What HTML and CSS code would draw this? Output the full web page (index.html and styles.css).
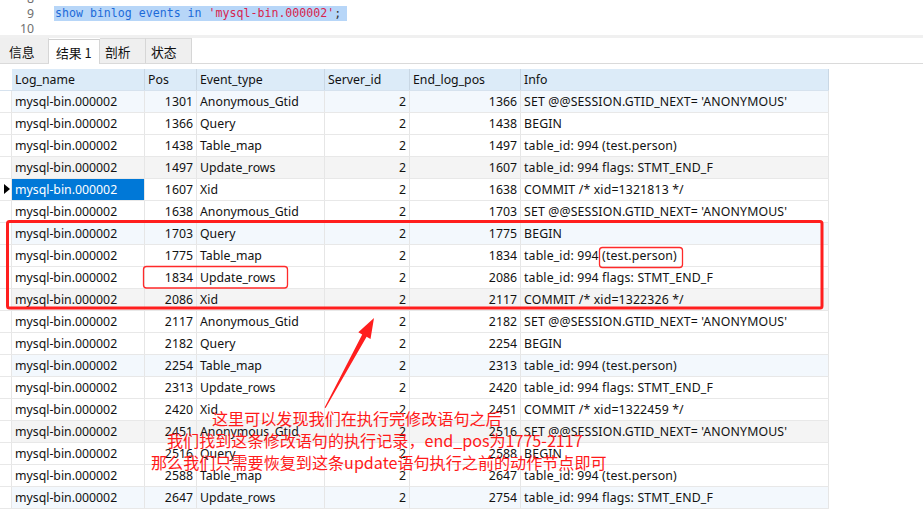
FILE: index.html
```html
<!DOCTYPE html>
<html lang="zh">
<head>
<meta charset="utf-8">
<title>binlog events</title>
<link rel="stylesheet" href="styles.css">
</head>
<body>
<div class="page">
  <div class="editor">
    <div class="lines">
      <div class="line"><span class="ln">8</span><span class="code"></span></div>
      <div class="line"><span class="ln">9</span><span class="code sel"><span class="kw">show binlog events in</span> <span class="str">'mysql-bin.000002'</span><span class="punc">;</span></span></div>
      <div class="line"><span class="ln">10</span><span class="code"></span></div>
    </div>
  </div>
  <div class="sep"></div>
  <div class="tabbar">
    <div class="tab">信息</div>
    <div class="tab active">结果 1</div>
    <div class="tab">剖析</div>
    <div class="tab">状态</div>
  </div>
  <div class="grid">
    <div class="row head">
      <div class="gut"></div>
      <div class="c">Log_name</div>
      <div class="c">Pos</div>
      <div class="c">Event_type</div>
      <div class="c">Server_id</div>
      <div class="c">End_log_pos</div>
      <div class="c">Info</div>
    </div>
    <div class="row tint-b"><div class="gut"></div><div class="c">mysql-bin.000002</div><div class="c r">1301</div><div class="c">Anonymous_Gtid</div><div class="c r">2</div><div class="c r">1366</div><div class="c">SET @@SESSION.GTID_NEXT= 'ANONYMOUS'</div></div>
    <div class="row"><div class="gut"></div><div class="c">mysql-bin.000002</div><div class="c r">1366</div><div class="c">Query</div><div class="c r">2</div><div class="c r">1438</div><div class="c">BEGIN</div></div>
    <div class="row"><div class="gut"></div><div class="c">mysql-bin.000002</div><div class="c r">1438</div><div class="c">Table_map</div><div class="c r">2</div><div class="c r">1497</div><div class="c">table_id: 994 (test.person)</div></div>
    <div class="row tint-g"><div class="gut"></div><div class="c">mysql-bin.000002</div><div class="c r">1497</div><div class="c">Update_rows</div><div class="c r">2</div><div class="c r">1607</div><div class="c">table_id: 994 flags: STMT_END_F</div></div>
    <div class="row"><div class="gut"><span class="marker"></span></div><div class="c selcell">mysql-bin.000002</div><div class="c r">1607</div><div class="c">Xid</div><div class="c r">2</div><div class="c r">1638</div><div class="c">COMMIT /* xid=1321813 */</div></div>
    <div class="row"><div class="gut"></div><div class="c">mysql-bin.000002</div><div class="c r">1638</div><div class="c">Anonymous_Gtid</div><div class="c r">2</div><div class="c r">1703</div><div class="c">SET @@SESSION.GTID_NEXT= 'ANONYMOUS'</div></div>
    <div class="row tint-b"><div class="gut"></div><div class="c">mysql-bin.000002</div><div class="c r">1703</div><div class="c">Query</div><div class="c r">2</div><div class="c r">1775</div><div class="c">BEGIN</div></div>
    <div class="row"><div class="gut"></div><div class="c">mysql-bin.000002</div><div class="c r">1775</div><div class="c">Table_map</div><div class="c r">2</div><div class="c r">1834</div><div class="c">table_id: 994 (test.person)</div></div>
    <div class="row"><div class="gut"></div><div class="c">mysql-bin.000002</div><div class="c r">1834</div><div class="c">Update_rows</div><div class="c r">2</div><div class="c r">2086</div><div class="c">table_id: 994 flags: STMT_END_F</div></div>
    <div class="row tint-g"><div class="gut"></div><div class="c">mysql-bin.000002</div><div class="c r">2086</div><div class="c">Xid</div><div class="c r">2</div><div class="c r">2117</div><div class="c">COMMIT /* xid=1322326 */</div></div>
    <div class="row"><div class="gut"></div><div class="c">mysql-bin.000002</div><div class="c r">2117</div><div class="c">Anonymous_Gtid</div><div class="c r">2</div><div class="c r">2182</div><div class="c">SET @@SESSION.GTID_NEXT= 'ANONYMOUS'</div></div>
    <div class="row"><div class="gut"></div><div class="c">mysql-bin.000002</div><div class="c r">2182</div><div class="c">Query</div><div class="c r">2</div><div class="c r">2254</div><div class="c">BEGIN</div></div>
    <div class="row tint-b"><div class="gut"></div><div class="c">mysql-bin.000002</div><div class="c r">2254</div><div class="c">Table_map</div><div class="c r">2</div><div class="c r">2313</div><div class="c">table_id: 994 (test.person)</div></div>
    <div class="row"><div class="gut"></div><div class="c">mysql-bin.000002</div><div class="c r">2313</div><div class="c">Update_rows</div><div class="c r">2</div><div class="c r">2420</div><div class="c">table_id: 994 flags: STMT_END_F</div></div>
    <div class="row"><div class="gut"></div><div class="c">mysql-bin.000002</div><div class="c r">2420</div><div class="c">Xid</div><div class="c r">2</div><div class="c r">2451</div><div class="c">COMMIT /* xid=1322459 */</div></div>
    <div class="row tint-g"><div class="gut"></div><div class="c">mysql-bin.000002</div><div class="c r">2451</div><div class="c">Anonymous_Gtid</div><div class="c r">2</div><div class="c r">2516</div><div class="c">SET @@SESSION.GTID_NEXT= 'ANONYMOUS'</div></div>
    <div class="row"><div class="gut"></div><div class="c">mysql-bin.000002</div><div class="c r">2516</div><div class="c">Query</div><div class="c r">2</div><div class="c r">2588</div><div class="c">BEGIN</div></div>
    <div class="row"><div class="gut"></div><div class="c">mysql-bin.000002</div><div class="c r">2588</div><div class="c">Table_map</div><div class="c r">2</div><div class="c r">2647</div><div class="c">table_id: 994 (test.person)</div></div>
    <div class="row tint-b"><div class="gut"></div><div class="c">mysql-bin.000002</div><div class="c r">2647</div><div class="c">Update_rows</div><div class="c r">2</div><div class="c r">2754</div><div class="c">table_id: 994 flags: STMT_END_F</div></div>
  </div>

  <div class="overlay">
    <svg class="marks" width="923" height="510" viewBox="0 0 923 510">
      <rect x="7.5" y="221.5" width="814.5" height="86.5" rx="2" fill="none" stroke="#ff1e1e" stroke-width="3"/>
      <rect x="143.5" y="266.5" width="144" height="21.5" rx="3" fill="none" stroke="#ff2a2a" stroke-width="1.3"/>
      <rect x="599.5" y="247.5" width="83" height="20" rx="3" fill="none" stroke="#ff2a2a" stroke-width="1.3"/>
      <polygon points="374,318 370.5,339 366.6,336.8 325.6,408 324.6,407.4 362.2,334.4 358.3,332.3" fill="#ff1e1e"/>
    </svg>
    <div class="note">
      <div class="nl n1">这里可以发现我们在执行完修改语句之后</div>
      <div class="nl n2">我们找到这条修改语句的执行记录，end_pos为1775-2117</div>
      <div class="nl n3">那么我们只需要恢复到这条update语句执行之前的动作节点即可</div>
    </div>
  </div>
</div>
</body>
</html>
```

FILE: styles.css
```css
html, body {
  margin: 0;
  padding: 0;
  background: #ffffff;
}
body {
  font-family: "Noto Sans", "Noto Sans CJK SC", sans-serif;
  font-size: 12.3px;
  color: #111;
  overflow: hidden;
}
.page {
  position: relative;
  width: 923px;
  height: 510px;
  overflow: hidden;
}

/* editor */
.editor {
  height: 35px;
  overflow: hidden;
  background: #fff;
}
.lines {
  margin-top: -9px;
}
.line {
  display: flex;
  height: 15px;
  line-height: 15px;
}
.ln {
  width: 34px;
  text-align: right;
  color: #707070;
  font-size: 12.3px;
  flex: none;
}
.code {
  margin-left: 20px;
  font-family: "DejaVu Sans Mono", "Liberation Mono", monospace;
  font-size: 11.6px;
  white-space: pre;
}
.sel {
  background: #b7d6f8;
  width: 293px;
  padding-left: 1px;
  box-sizing: border-box;
}
.kw { color: #1c6ad8; }
.str { color: #d8234d; }
.punc { color: #333; }

.sep {
  height: 3px;
  background: #f0f0f0;
}

/* tabs */
.tabbar {
  display: flex;
  height: 25px;
  border-bottom: 1px solid #dadada;
  background: #fff;
}
.tab {
  box-sizing: border-box;
  width: 46px;
  height: 25px;
  line-height: 26px;
  padding-left: 5px;
  background: #efefef;
  border-top: 1px solid #dcdcdc;
  border-right: 1px solid #d6d6d6;
  font-family: "Noto Sans CJK SC", sans-serif;
  font-size: 12.8px;
  color: #111;
}
.tab:first-child {
  width: 49px;
  padding-left: 9px;
  border-top-color: #efefef;
}
.tab.active {
  width: 51px;
  padding-left: 7px;
  background: #fff;
  border-top: 1px solid #d0d0d0;
  margin-top: 1px;
  height: 25px;
  margin-bottom: -1px;
}

/* grid */
.grid {
  padding-top: 5px;
}
.row {
  display: grid;
  grid-template-columns: 12px 133px 52px 128px 85px 111px 308px;
  height: 22px;
  box-sizing: border-box;
  border-bottom: 1px solid #e8e8e8;
  width: 829px;
}
.row > div {
  box-sizing: border-box;
  border-right: 1px solid #e6e6e6;
  line-height: 21px;
  white-space: nowrap;
  overflow: hidden;
}
.gut {
  position: relative;
  background: #fff;
  border-right: 1px solid #e2e2e2;
}
.c {
  padding: 0 3px;
}
.c.r {
  text-align: right;
  padding-right: 3px;
}
.c:last-child {
  letter-spacing: 0.15px;
}
.head {
  border-bottom: 1px solid #d6e2ee;
}
.head .c {
  background: #dcebf8;
  border-right: 1px solid #c9d7e4;
  letter-spacing: 0;
}
.head .gut {
  border-right-color: #fff;
}
.tint-b .c { background: #f3f8fd; }
.tint-g .c { background: #f4f4f4; }
.selcell {
  background: #0078d7;
  color: #fff;
}
.marker {
  position: absolute;
  left: 4px;
  top: 5px;
  width: 0;
  height: 0;
  border-top: 5px solid transparent;
  border-bottom: 5px solid transparent;
  border-left: 6px solid #000;
}

/* overlay annotations */
.overlay {
  position: absolute;
  left: 0;
  top: 0;
  width: 923px;
  height: 510px;
  pointer-events: none;
}
.marks {
  position: absolute;
  left: 0;
  top: 0;
}
.note {
  position: absolute;
  left: 0;
  top: 407px;
  color: #ff1a1a;
  font-family: "Noto Sans CJK SC", sans-serif;
  font-size: 16.1px;
  line-height: 22px;
  white-space: nowrap;
}
.n1 { margin-left: 212px; }
.n2 { margin-left: 167px; }
.n3 { margin-left: 151px; }
```
